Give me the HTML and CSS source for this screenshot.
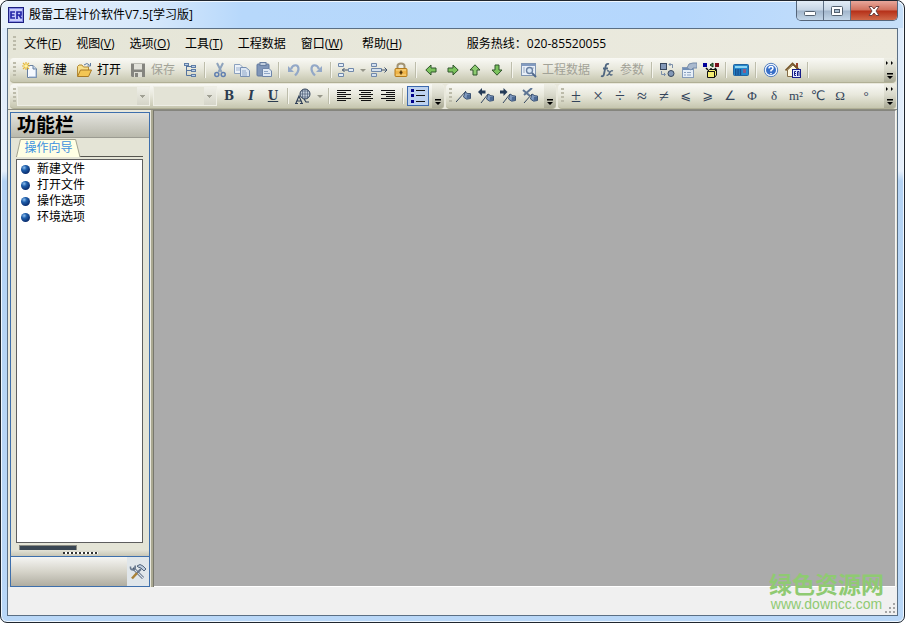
FILE: index.html
```html
<!DOCTYPE html>
<html lang="zh-CN">
<head>
<meta charset="utf-8">
<title>殷雷工程计价软件V7.5[学习版]</title>
<link rel="stylesheet" href="styles.css">
</head>
<body>
<div class="window">
  <header class="titlebar">
    <svg class="logo" width="16" height="16" viewBox="0 0 16 16"><rect x=".5" y=".5" width="15" height="15" fill="#8a8fe6" stroke="#1c1f80"/><rect x="2" y="2" width="12" height="12" fill="#c9cdfa"/><path d="M7 5H3V11H7M3 8H6.500M9 12V5H13V8H9M11 8L13.500 11.500" fill="none" stroke="#2427a8" stroke-width="1.700"/></svg>
    <h1 class="caption">殷雷工程计价软件V7.5[学习版]</h1>
    <div class="winbuttons">
      <button class="winbtn" aria-label="最小化"><svg width="14" height="12" viewBox="0 0 14 12"><rect x="1.500" y="6.500" width="11" height="4" rx="1" fill="#fff" stroke="#53606f"/></svg></button>
      <button class="winbtn" aria-label="最大化"><svg width="14" height="12" viewBox="0 0 14 12"><rect x="1.500" y="1.500" width="11" height="9" rx="1" fill="#fff" stroke="#53606f"/><rect x="4.500" y="4.500" width="5" height="3" fill="#a9bdd0" stroke="#53606f"/></svg></button>
      <button class="winbtn close" aria-label="关闭"><svg width="14" height="12" viewBox="0 0 14 12"><path d="M2 1.500H5L7 4L9 1.500H12L9 6L12 10.500H9L7 8L5 10.500H2L5 6Z" fill="#fff" stroke="#6c4040"/></svg></button>
    </div>
  </header>

  <div class="client">
    <nav class="menubar">
      <span class="grip"></span>
      <button class="menu">文件(<u>F</u>)</button>
      <button class="menu">视图(<u>V</u>)</button>
      <button class="menu">选项(<u>O</u>)</button>
      <button class="menu">工具(<u>T</u>)</button>
      <button class="menu">工程数据</button>
      <button class="menu">窗口(<u>W</u>)</button>
      <button class="menu help">帮助(<u>H</u>)</button>
      <span class="hotline">服务热线：020-85520055</span>
    </nav>

    <div class="row">
      <div class="toolbar last">
        <span class="grip"></span>
        <button class="tool labelled"><svg width="16" height="16" viewBox="0 0 16 16"><path d="M5.500 3.500H11L14.500 7V15.500H5.500Z" fill="#f5f9ff" stroke="#68809f"/><path d="M11 3.500V7H14.500" fill="#c9d9ec" stroke="#68809f"/><path d="M14 8V15H7" fill="none" stroke="#8fa9cc"/><path d="M4 0V8M0 4H8M1 1L7 7M7 1L1 7" stroke="#e6b637" stroke-width="1.200"/><circle cx="4" cy="4" r="1.800" fill="#fff3a0"/></svg>新建</button>
        <button class="tool labelled"><svg width="16" height="16" viewBox="0 0 16 16"><path d="M1.500 14V4.500L3 3H6L7.500 5H12.500V8" fill="#f7df8b" stroke="#b38a35"/><path d="M1.500 14.500L4.500 8H15.500L12.500 14.500Z" fill="#f3c654" stroke="#a97b26"/><path d="M8 3Q11 0 13.500 3M14.500 1V4H11.500" fill="none" stroke="#5b7aa0"/></svg>打开</button>
        <button class="tool labelled" disabled><svg width="16" height="16" viewBox="0 0 16 16"><path d="M1 1.500H15V15H2L1 14Z" fill="#85857f"/><rect x="4" y="2" width="8" height="5.500" fill="#e2e2da"/><rect x="4" y="10" width="8" height="5" fill="#deded5"/><rect x="5" y="11" width="3" height="4" fill="#85857f"/></svg>保存</button>
        <button class="tool" aria-label="结构"><svg width="16" height="16" viewBox="0 0 16 16"><path d="M4.500 4V13.500H9M4.500 8.500H9M4.500 4.500H9" fill="none" stroke="#54739e"/><path d="M2 1H7V4H2ZM9 3H14V6H9ZM9 7H14V10H9ZM9 12H14V15H9Z" fill="#5e7da6"/><path d="M3 2H6V3H3ZM10 4H13V5H10ZM10 8H13V9H10ZM10 13H13V14H10Z" fill="#bdd0e8"/></svg></button>
        <span class="sep"></span>
        <button class="tool" aria-label="剪切"><svg width="16" height="16" viewBox="0 0 16 16"><path d="M5 1L9.500 10M11 1L6.500 10" stroke="#8ea3bd" stroke-width="2"/><circle cx="4.800" cy="12.500" r="2" fill="none" stroke="#607fb0" stroke-width="1.500"/><circle cx="11.200" cy="12.500" r="2" fill="none" stroke="#607fb0" stroke-width="1.500"/></svg></button>
        <button class="tool" aria-label="复制"><svg width="16" height="16" viewBox="0 0 16 16"><path d="M.5 2.500H6L8.500 5V11.500H.5Z" fill="#edf2f8" stroke="#8ba1be"/><path d="M2 6H6M2 8H6" stroke="#9bb1cf"/><path d="M6.500 5.500H12L15.500 8.500V14.500H6.500Z" fill="#dce6f2" stroke="#7890b3"/><path d="M8 9H12M8 11H13M8 13H13" stroke="#91a8c9"/></svg></button>
        <button class="tool" aria-label="粘贴"><svg width="16" height="16" viewBox="0 0 16 16"><rect x="1" y="2" width="12" height="12" rx="1" fill="#8096b8" stroke="#61799f"/><rect x="4" y=".5" width="6" height="3" fill="#c2cfdf" stroke="#667d9f"/><path d="M6.500 6.500H13L15.500 9V14.500H6.500Z" fill="#e0e9f4" stroke="#6f86aa"/><path d="M8 9.500H12M8 11.500H14" stroke="#90a7c7"/></svg></button>
        <span class="sep"></span>
        <button class="tool" aria-label="撤销"><svg width="16" height="16" viewBox="0 0 16 16"><path d="M5 7C7 2 12.500 2 12.500 7C12.500 10 11 11.500 9 13.500" fill="none" stroke="#93a8c7" stroke-width="2.200"/><path d="M2 4V10H8Z" fill="#93a8c7"/></svg></button>
        <button class="tool" aria-label="重做"><svg width="16" height="16" viewBox="0 0 16 16"><path d="M11 7C9 2 3.500 2 3.500 7C3.500 10 5 11.500 7 13.500" fill="none" stroke="#93a8c7" stroke-width="2.200"/><path d="M14 4V10H8Z" fill="#93a8c7"/></svg></button>
        <span class="sep"></span>
        <button class="tool" aria-label="插入行"><svg width="18" height="16" viewBox="0 0 18 16"><path d="M1.500 1.500H6.500V4.500H1.500ZM1.500 11.500H6.500V14.500H1.500ZM11.500 6.500H16.500V9.500H11.500Z" fill="#e4edf7" stroke="#7088aa"/><path d="M5 8H11M7.500 6L5.500 8L7.500 10" fill="none" stroke="#40536d"/></svg></button>
        <button class="drop" aria-label="更多"></button>
        <button class="tool" aria-label="删除行"><svg width="18" height="16" viewBox="0 0 18 16"><path d="M1.500 1.500H6.500V4.500H1.500ZM1.500 11.500H6.500V14.500H1.500ZM1.500 6.500H11.500V9.500H1.500Z" fill="#d3e0ee" stroke="#7088aa"/><path d="M11 8H17M14.500 5.500L17 8L14.500 10.500" fill="none" stroke="#40536d"/></svg></button>
        <button class="tool" aria-label="锁定"><svg width="16" height="16" viewBox="0 0 16 16"><path d="M4.500 7V4Q4.500 1.500 8 1.500Q11.500 1.500 11.500 4V7" fill="none" stroke="#a29372" stroke-width="2"/><rect x="2" y="6.500" width="12" height="8" rx="1" fill="#efb549" stroke="#b47b1c"/><path d="M3 8H13M3 13H13" stroke="#f8d98d"/><path d="M8 8.500V12.500M6.500 10.500H9.500" stroke="#51350a" stroke-width="1.500"/></svg></button>
        <span class="sep"></span>
        <button class="tool" aria-label="左移"><svg width="12" height="12" viewBox="0 0 12 12"><path d="M.8 6L6 1V4H11V8H6V11Z" fill="#7bc35d" stroke="#31562c"/></svg></button>
        <button class="tool" aria-label="右移"><svg width="12" height="12" viewBox="0 0 12 12"><path d="M11.200 6L6 1V4H1V8H6V11Z" fill="#7bc35d" stroke="#31562c"/></svg></button>
        <button class="tool" aria-label="上移"><svg width="12" height="12" viewBox="0 0 12 12"><path d="M6 .8L1 6H4V11H8V6H11Z" fill="#8dcc70" stroke="#31562c"/></svg></button>
        <button class="tool" aria-label="下移"><svg width="12" height="12" viewBox="0 0 12 12"><path d="M6 11.200L1 6H4V1H8V6H11Z" fill="#7bc35d" stroke="#31562c"/></svg></button>
        <span class="sep"></span>
        <button class="tool labelled" disabled><svg width="16" height="16" viewBox="0 0 16 16"><rect x=".5" y="1.500" width="14" height="12" fill="#e8eff8" stroke="#8196b2"/><path d="M1 3H14" stroke="#829bc0" stroke-width="2"/><path d="M2 6H4M2 8H4M2 10H4M10 6H13" stroke="#9cacc2"/><circle cx="8.500" cy="8.500" r="3" fill="#d7e6f5" stroke="#6a81a2" stroke-width="1.400"/><path d="M11 11L15 15" stroke="#526a8c" stroke-width="2"/></svg>工程数据</button>
        <button class="tool labelled" disabled><svg width="16" height="16" viewBox="0 0 16 16"><path d="M10 2Q7 1 6.500 5L5 12Q4.500 15 2 14M4 6.500H9" fill="none" stroke="#4f6680" stroke-width="1.800"/><path d="M8 9Q10 8 10.500 11Q11 14 13.500 12.500M14 9Q12 8 10.500 11Q9 14 7.500 13" fill="none" stroke="#4f6680" stroke-width="1.300"/></svg>参数</button>
        <span class="sep"></span>
        <button class="tool" aria-label="转换"><svg width="16" height="16" viewBox="0 0 16 16"><rect x="1.500" y="1.500" width="6" height="6" fill="#8398b7" stroke="#38475d"/><circle cx="12" cy="11.500" r="3" fill="#8398b7" stroke="#38475d"/><path d="M10 2.500H13.500V6M11.500 1L10 2.500L11.500 4M2.500 9V12.500H6M5 11L6.500 12.500L5 14" fill="none" stroke="#7b8fa9"/></svg></button>
        <button class="tool" aria-label="属性"><svg width="16" height="16" viewBox="0 0 16 16"><rect x="1.500" y="5.500" width="11" height="10" fill="#e7eff8" stroke="#869bb8"/><path d="M2 7H12" stroke="#6f8db5" stroke-width="2"/><path d="M3 10.500H5M6 10.500H10M3 13H5M6 13H10" stroke="#8ba1bf"/><path d="M6 6L8 2L12 1H16V6H12L10 8Z" fill="#a9b9ce" stroke="#768ca9"/></svg></button>
        <button class="tool" aria-label="打包"><svg width="16" height="16" viewBox="0 0 16 16"><path d="M0 1H4V5H0Z" fill="#000099"/><path d="M12 1H16V5H12Z" fill="#7b0e1a"/><path d="M7 3L10 1V5Z" fill="#4c9050" stroke="#16351a"/><path d="M3 6L5 8M13 6L11 8M8 6V8" stroke="#111" stroke-width="1.500"/><path d="M4.500 9.500L6.500 7.500H13.500V13L11.500 15.500H4.500Z" fill="#f5ed73" stroke="#111"/><path d="M4.500 9.500H11.500V15.500M11.500 9.500L13.500 7.500" fill="none" stroke="#111"/></svg></button>
        <span class="sep"></span>
        <button class="tool" aria-label="计算器"><svg width="16" height="16" viewBox="0 0 16 16"><rect x=".5" y="2.500" width="15" height="11" rx="1" fill="#2588cc" stroke="#2264a0"/><rect x="2" y="4" width="12" height="2" fill="#8ed5f4"/><path d="M2 8H9M2 10H9M2 12H9" stroke="#143b7c" stroke-dasharray="1.500 .8" stroke-width="1.300"/><rect x="10" y="7" width="3" height="4" fill="#8a5a86"/></svg></button>
        <span class="sep"></span>
        <button class="tool" aria-label="帮助"><svg width="16" height="16" viewBox="0 0 16 16"><circle cx="8" cy="8" r="6.700" fill="#f0f6ff" stroke="#5680bc"/><circle cx="8" cy="8" r="5" fill="#386fc8"/><path d="M6 6.500Q6 4.500 8 4.500Q10 4.500 10 6.200Q10 7.500 8 8.500V9.500M8 11V12.200" fill="none" stroke="#fff" stroke-width="1.500"/></svg></button>
        <button class="tool" aria-label="主页"><svg width="16" height="16" viewBox="0 0 16 16"><path d="M11 1H13V6H11Z" fill="#9b442c"/><path d="M2.500 8V14.500H13V8L8 3Z" fill="#fff8de" stroke="#846d48"/><path d="M.5 8.500L7.500 1.500L15 8.500" fill="none" stroke="#765527" stroke-width="1.700"/><rect x="7.500" y="7.500" width="8" height="8" fill="#e4e7ff" stroke="#171c88"/><path d="M11 9.500H9.500V13.500H11M9.500 11.500H11M12.500 14V9.500H14V14" fill="none" stroke="#171c88"/></svg></button>
        <span class="sep"></span>
        <button class="overflow" aria-label="工具栏选项"><svg width="10" height="22" viewBox="0 0 10 22"><path d="M1 2L3 4L1 6ZM6 2L8 4L6 6ZM2 14H8V15.500H2ZM2 17H8L5 20Z" fill="#000"/></svg></button>
      </div>
    </div>

    <div class="row second">
      <div class="toolbar">
        <span class="grip"></span>
        <select class="combo font" aria-label="字体"></select>
        <select class="combo size" aria-label="字号"></select>
        <button class="tool letter">B</button>
        <button class="tool letter"><i>I</i></button>
        <button class="tool letter"><u>U</u></button>
        <span class="sep"></span>
        <button class="tool" aria-label="颜色"><svg width="16" height="16" viewBox="0 0 16 16"><circle cx="10" cy="6" r="5" fill="#c3cfdc" stroke="#304058"/><path d="M10 1V11M5 6H15M6 3H14M6 9H14M7.500 2V10M12.500 2V10" stroke="#40536d" stroke-width=".6"/><path d="M1 15L4 8L7 15M2 13H6M0 15.500H3M5 15.500H8M9 11L11 14H14" fill="none" stroke="#304058" stroke-width="1.200"/></svg></button>
        <button class="drop" aria-label="更多颜色"></button>
        <span class="sep"></span>
        <button class="tool" aria-label="左对齐"><svg width="16" height="14" viewBox="0 0 16 14"><path d="M1 1.500H15M1 3.500H10M1 5.500H15M1 7.500H10M1 9.500H15M1 11.500H10" stroke="#111"/></svg></button>
        <button class="tool" aria-label="居中"><svg width="16" height="14" viewBox="0 0 16 14"><path d="M1 1.500H15M3 3.500H13M1 5.500H15M3 7.500H13M1 9.500H15M3 11.500H13" stroke="#111"/></svg></button>
        <button class="tool" aria-label="右对齐"><svg width="16" height="14" viewBox="0 0 16 14"><path d="M1 1.500H15M6 3.500H15M1 5.500H15M6 7.500H15M1 9.500H15M6 11.500H15" stroke="#111"/></svg></button>
        <span class="sep"></span>
        <button class="tool pressed" aria-label="列表"><svg width="16" height="14" viewBox="0 0 16 14"><path d="M1 0H4V3H1ZM1 5H4V8H1ZM1 11H4V14H1Z" fill="#00008b"/><path d="M6 1.500H15M6 6.500H15M6 12.500H15" stroke="#111"/></svg></button>
        <button class="overflow" aria-label="工具栏选项"><svg width="10" height="22" viewBox="0 0 10 22"><path d="M2 14H8V15.500H2ZM2 17H8L5 20Z" fill="#000"/></svg></button>
      </div>
      <div class="toolbar">
        <span class="grip"></span>
        <button class="tool" aria-label="书签"><svg width="16" height="16" viewBox="0 0 16 16"><path d="M0 14L10 3" stroke="#33465f"/><path d="M9 4L7.500 9Q10 12.500 14.500 10.500V5.500Q12 6.500 9 4Z" fill="#7f9ac0" stroke="#3c5373"/><path d="M11 7L10.500 11L14 10V6.500Z" fill="#4d6a94"/></svg></button>
        <button class="tool" aria-label="上一个书签"><svg width="16" height="16" viewBox="0 0 16 16"><path d="M3 15L10 6" stroke="#33465f"/><path d="M10 6L8.500 11Q11 14.500 15.500 12.500V8Q13 8.500 10 6Z" fill="#7f9ac0" stroke="#3c5373"/><path d="M12 9L11.500 13L15 12V9Z" fill="#4d6a94"/><path d="M0 4L4 0V2.500H7.500V5.500H4V8Z" fill="#243b58"/></svg></button>
        <button class="tool" aria-label="下一个书签"><svg width="16" height="16" viewBox="0 0 16 16"><path d="M3 15L10 6" stroke="#33465f"/><path d="M10 6L8.500 11Q11 14.500 15.500 12.500V8Q13 8.500 10 6Z" fill="#7f9ac0" stroke="#3c5373"/><path d="M12 9L11.500 13L15 12V9Z" fill="#4d6a94"/><path d="M7.500 4L3.500 0V2.500H0V5.500H3.500V8Z" fill="#243b58"/></svg></button>
        <button class="tool" aria-label="清除书签"><svg width="16" height="16" viewBox="0 0 16 16"><path d="M2 15L10 6" stroke="#33465f"/><path d="M10 6L8.500 11Q11 14.500 15.500 12.500V8Q13 8.500 10 6Z" fill="#7f9ac0" stroke="#3c5373"/><path d="M12 9L11.500 13L15 12V9Z" fill="#4d6a94"/><path d="M1 2L8 8M10 0L2 7" stroke="#5d7594" stroke-width="2"/></svg></button>
        <button class="overflow" aria-label="工具栏选项"><svg width="10" height="22" viewBox="0 0 10 22"><path d="M2 14H8V15.500H2ZM2 17H8L5 20Z" fill="#000"/></svg></button>
      </div>
      <div class="toolbar last">
        <span class="grip"></span>
        <button class="tool sym op">±</button>
        <button class="tool sym op">×</button>
        <button class="tool sym op">÷</button>
        <button class="tool sym op">≈</button>
        <button class="tool sym op">≠</button>
        <button class="tool sym">⩽</button>
        <button class="tool sym">⩾</button>
        <button class="tool sym">∠</button>
        <button class="tool sym">Φ</button>
        <button class="tool sym">δ</button>
        <button class="tool sym">m²</button>
        <button class="tool sym">℃</button>
        <button class="tool sym">Ω</button>
        <button class="tool sym wide">°</button>
        <button class="overflow" aria-label="工具栏选项"><svg width="10" height="22" viewBox="0 0 10 22"><path d="M1 2L3 4L1 6ZM6 2L8 4L6 6ZM2 14H8V15.500H2ZM2 17H8L5 20Z" fill="#000"/></svg></button>
      </div>
    </div>

    <div class="workspace">
      <aside class="panel">
        <h2 class="paneltitle">功能栏</h2>
        <div class="panelbody">
          <div class="tabs">
            <button class="tab"><svg class="tabshape" viewBox="0 0 66 18" preserveAspectRatio="none"><path d="M.5 18L4.500 .5H60.500L65 18" fill="#ffffe4" stroke="#a2a28f"/></svg><span class="tabtext">操作向导</span></button>
          </div>
          <ul class="list">
            <li><a href="#"><span class="ball"></span>新建文件</a></li>
            <li><a href="#"><span class="ball"></span>打开文件</a></li>
            <li><a href="#"><span class="ball"></span>操作选项</a></li>
            <li><a href="#"><span class="ball"></span>环境选项</a></li>
          </ul>
          <div class="strip"></div>
        </div>
        <div class="splitter"><span class="dots"></span></div>
        <div class="panelfoot">
          <button class="config" aria-label="设置"><svg width="18" height="18" viewBox="0 0 18 18"><path d="M4 5L14 15" stroke="#46566d" stroke-width="2.600"/><path d="M5 6L14 15" stroke="#dce4ee" stroke-width="1.200"/><path d="M1.500 3.500Q1 7 4.500 7Q7 6 6 2.500" fill="none" stroke="#68798e" stroke-width="1.600"/><path d="M12 6L8 10" stroke="#66758a" stroke-width="2"/><path d="M8 10L3 15.500" stroke="#a98137" stroke-width="2.500"/><path d="M8 3Q11 0 14 3L17 6L15 8L12 5L9 4Z" fill="#bccbdd" stroke="#56687f"/></svg></button>
        </div>
      </aside>
      <div class="divider"></div>
      <main class="mdi"></main>
    </div>

    <footer class="status"><svg class="sizegrip" width="12" height="12" viewBox="0 0 12 12"><path d="M9 1H11V3H9ZM5 5H7V7H5ZM9 5H11V7H9ZM1 9H3V11H1ZM5 9H7V11H5ZM9 9H11V11H9Z" fill="#a5a5a5"/></svg></footer>
  </div>

  <div class="mark"><strong>绿色资源网</strong><span>www.downcc.com</span></div>
</div>
</body>
</html>
```
FILE: styles.css
```css
* { box-sizing: border-box; }

body {
  margin: 0;
  background: #fff;
  color: #000;
  font: 12px/16px "Open Sans", "Noto Sans CJK SC", sans-serif;
}

button {
  margin: 0;
  padding: 0;
  border: 0;
  background: none;
  color: inherit;
  font: inherit;
}

h1, h2, ul { margin: 0; padding: 0; }
svg { display: block; flex: none; }

.window {
  position: relative;
  display: flex;
  flex-direction: column;
  height: 100vh;
  padding: 0 6px 6px;
  border: 1px solid #20262e;
  border-radius: 8px 8px 7px 7px;
  background: linear-gradient(#dcebfc, #e6effa 170px, #b4d3f4 180px, #b9d7f7);
  box-shadow: inset 0 0 0 1px #eff7ff;
}

/* title bar */
.titlebar {
  display: flex;
  align-items: center;
  flex: none;
  height: 27px;
  margin: 0 -5px;
  padding: 0 2px 0 6px;
  gap: 5px;
  border-radius: 7px 7px 0 0;
  background: linear-gradient(90deg, #e8f2fc, #d6e8fb 150px, #b7d8fb 240px, #b5d7fd 75%, #c6dff9);
  box-shadow: inset 0 1px 0 #eff7ff;
}
.caption { flex: 1; font-size: 12px; font-weight: 400; }
.winbuttons {
  display: flex;
  align-self: flex-start;
  margin-right: 3px;
  border: 1px solid #55657a;
  border-top: 0;
  border-radius: 0 0 5px 5px;
  overflow: hidden;
}
.winbtn {
  display: grid;
  place-items: center;
  width: 27px;
  height: 19px;
  border-right: 1px solid #5e6f84;
  background: linear-gradient(#e3edf7, #c5d4e4 48%, #a1b5cb 52%, #c3d6e8);
}
.winbtn.close {
  width: 46px;
  border-right: 0;
  background: linear-gradient(#e7a79b, #d0705c 48%, #b52f18 52%, #d0694a);
}

/* client area */
.client {
  display: flex;
  flex: 1;
  flex-direction: column;
  min-height: 0;
  border: 1px solid #5b6f84;
  background: #e9e8dc;
}
.menubar {
  display: flex;
  align-items: center;
  flex: none;
  height: 29px;
  padding: 0 2px;
  background: linear-gradient(90deg, #e5e5d7, #ecebe0);
}
.menu { padding: 0 8px 0 7px; white-space: nowrap; }
.menu.help { margin-left: 4px; }
.hotline { margin-left: 57px; white-space: nowrap; }

.grip {
  flex: none;
  width: 3px;
  height: 16px;
  margin: 0 1px 0 3px;
  background: repeating-linear-gradient(#bcbbaa 0 2px, transparent 2px 4px);
}

/* toolbars */
.row {
  display: flex;
  flex: none;
  padding: 0 1px 0 2px;
  margin-bottom: 1px;
  gap: 2px;
}
.second { border-bottom: 1px solid #8b8b80; margin-bottom: 0; }
.toolbar {
  display: flex;
  align-items: center;
  height: 25px;
  border-bottom: 1px solid #b1b096;
  border-radius: 4px;
  background: linear-gradient(#f9f9f5, #e8e8dc 45%, #c6c6af);
}
.toolbar.last { flex: 1; }
.tool {
  display: flex;
  align-items: center;
  justify-content: center;
  flex: none;
  width: 22px;
  height: 22px;
}
.tool.labelled {
  width: auto;
  padding: 0 4px 0 5px;
  gap: 5px;
  white-space: nowrap;
}
.tool:disabled { color: #a2a297; }
.sep {
  flex: none;
  width: 8px;
  height: 16px;
  background: linear-gradient(90deg, transparent 3px, #bdbdab 3px 4px, #f5f5ee 4px 5px, transparent 5px);
}
.drop {
  flex: none;
  width: 11px;
  height: 22px;
}
.drop::before {
  content: "";
  display: block;
  margin: 0 3px;
  border: 3px solid transparent;
  border-top-color: #969689;
  border-bottom: 0;
}
.overflow {
  flex: none;
  width: 12px;
  height: 24px;
  margin-left: 3px;
  padding: 1px;
  border-radius: 0 4px 4px 0;
  background: linear-gradient(#efefe6, #d6d6c8 50%, #a9a994);
}
.last .overflow { margin-left: auto; }

.combo {
  flex: none;
  height: 20px;
  border: 1px solid #eeeee5;
  border-radius: 0;
  appearance: none;
  background:
    linear-gradient(#a0a094, #a0a094) right 4px top 8px / 5px 1px no-repeat,
    linear-gradient(#a0a094, #a0a094) right 5px top 9px / 3px 1px no-repeat,
    linear-gradient(#a0a094, #a0a094) right 6px top 10px / 1px 1px no-repeat,
    linear-gradient(#efefe8, #d5d5c8) right / 12px 100% no-repeat,
    #e3e3d6;
}
.combo.font { width: 133px; margin-right: 3px; }
.combo.size { width: 64px; margin-right: 1px; }

.letter {
  color: #2c3c50;
  font: bold 12px/20px "DejaVu Serif", serif;
}
.pressed {
  height: 20px;
  border: 1px solid #3c69ae;
  background: #bdd2f0;
}
.sym {
  color: #33445a;
  font: 13px/20px "Liberation Serif", "DejaVu Sans", "Noto Sans CJK SC", serif;
}
.sym.op { font-size: 18px; }
.sym.wide { width: 30px; }

/* work area */
.workspace {
  display: flex;
  flex: 1;
  min-height: 0;
  padding: 0 1px 0 2px;
}
.panel {
  display: flex;
  flex: none;
  flex-direction: column;
  width: 140px;
  margin-top: 2px;
  border: 1px solid #3e6fac;
  background: #e4e4d6;
}
.paneltitle {
  flex: none;
  height: 25px;
  padding-left: 6px;
  border-bottom: 1px solid #9b9b91;
  background: linear-gradient(#e4e4df, #b9b9ac);
  font: bold 19px/22px "Noto Sans CJK SC", sans-serif;
}
.panelbody {
  display: flex;
  flex: 1;
  flex-direction: column;
  min-height: 0;
  padding: 1px 6px 0 5px;
}
.tabs {
  flex: none;
  height: 18px;
  margin-bottom: 2px;
  border-bottom: 1px solid #55554f;
}
.tab {
  display: grid;
  width: 65px;
  height: 18px;
  color: #3c91df;
}
.tabshape { grid-area: 1 / 1; width: 100%; height: 18px; }
.tabtext { grid-area: 1 / 1; line-height: 18px; }
.list {
  flex: 1;
  padding-top: 1px;
  border: 1px solid #5e5e5e;
  background: #fff;
  list-style: none;
}
.list a {
  display: flex;
  align-items: center;
  height: 16px;
  padding-left: 4px;
  gap: 7px;
  color: #000;
  text-decoration: none;
}
.ball {
  width: 9px;
  height: 9px;
  border-radius: 50%;
  background: radial-gradient(circle at 35% 30%, #8fc0f0, #1f5fab 30%, #092b6c 75%);
}
.strip {
  flex: none;
  width: 58px;
  height: 5px;
  margin: 2px 0 0 3px;
  border: 1px solid #8b8b82;
  border-bottom: 0;
  background: #3a4652;
}
.splitter {
  display: grid;
  place-items: center;
  flex: none;
  height: 6px;
  background: linear-gradient(#e3e2d6, #c8c6b6);
}
.dots {
  width: 35px;
  height: 2px;
  background: repeating-linear-gradient(90deg, #333 0 2px, #fff 2px 4px);
}
.panelfoot {
  display: flex;
  justify-content: flex-end;
  flex: none;
  height: 30px;
  border-top: 1px solid #3e6fac;
  background: linear-gradient(#f5f5f3, #d6d4ca 50%, #b0ada1);
}
.config {
  display: grid;
  place-items: center;
  width: 22px;
  background: #e0e6ea;
}
.divider {
  flex: none;
  width: 4px;
  border-right: 1px solid #77776e;
  background: linear-gradient(90deg, #e8e8de 1px, #aaa891 1px);
}
.mdi {
  flex: 1;
  border-top: 1px solid #85857e;
  border-right: 1px solid #f4f4f4;
  border-bottom: 1px solid #fff;
  background: #ababab;
}
.status {
  display: flex;
  align-items: flex-end;
  justify-content: flex-end;
  flex: none;
  height: 28px;
  padding: 1px;
  background: #f0f0f0;
}

/* site mark laid over the lower right corner */
.mark {
  position: absolute;
  right: 20px;
  bottom: 9px;
  display: flex;
  flex-direction: column;
  align-items: center;
  color: #8fca72;
  pointer-events: none;
}
.mark strong { font: bold 23px/24px "Noto Sans CJK SC", sans-serif; }
.mark span { font: 14px/18px "Liberation Sans", sans-serif; }
```
